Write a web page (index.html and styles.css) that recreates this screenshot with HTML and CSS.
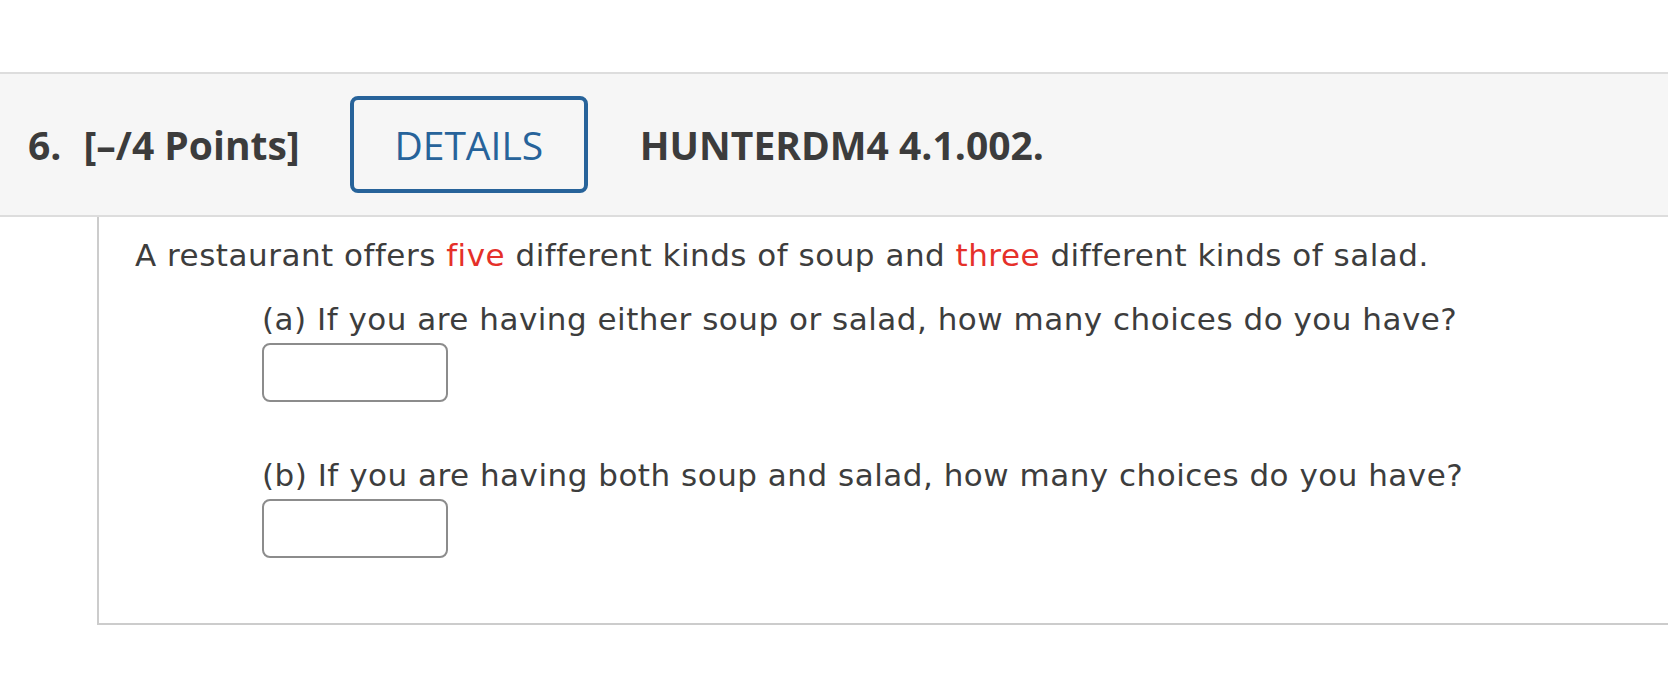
FILE: index.html
```html
<!DOCTYPE html>
<html lang="en">
<head>
<meta charset="utf-8">
<title>Question 6</title>
<link rel="stylesheet" href="styles.css">
</head>
<body>
<div class="page">
  <div class="qheader">
    <span class="qnum">6.</span>
    <span class="qpoints">[–/4 Points]</span>
    <button class="details" type="button">DETAILS</button>
    <span class="qref">HUNTERDM4 4.1.002.</span>
  </div>
  <div class="qbody">
    <p class="intro">A restaurant offers <span class="red">five</span> different kinds of soup and <span class="red">three</span> different kinds of salad.</p>
    <div class="part part-a">
      <p class="ptext">(a) If you are having either soup or salad, how many choices do you have?</p>
      <input class="answer" type="text" aria-label="answer a">
    </div>
    <div class="part part-b">
      <p class="ptext">(b) If you are having both soup and salad, how many choices do you have?</p>
      <input class="answer" type="text" aria-label="answer b">
    </div>
  </div>
</div>
</body>
</html>
```

FILE: styles.css
```css
html, body {
  margin: 0;
  padding: 0;
  background: #ffffff;
}

.page {
  padding-top: 72px;
}

.qheader {
  display: flex;
  align-items: center;
  height: 141px;
  background: #f6f6f6;
  border-top: 2px solid #dddddd;
  border-bottom: 2px solid #dddddd;
  padding-left: 28px;
  font-family: "Open Sans", sans-serif;
  font-size: 39px;
  font-weight: 700;
  color: #3c3c3c;
}

.qnum {
  margin-right: 22px;
}

.qpoints {
  margin-right: 50px;
}

.details {
  box-sizing: border-box;
  width: 238px;
  height: 97px;
  padding: 0;
  margin: 0 52px 0 0;
  background: #f6f6f6;
  border: 4px solid #27639a;
  border-radius: 8px;
  color: #27639a;
  font-family: "Open Sans", sans-serif;
  font-size: 39px;
  font-weight: 400;
  line-height: 1;
}

.qbody {
  margin-left: 97px;
  border-left: 2px solid #cccccc;
  border-bottom: 2px solid #cccccc;
  padding: 18px 0 65px 36px;
  font-family: "DejaVu Sans", Verdana, sans-serif;
  font-size: 31px;
  line-height: 40px;
  letter-spacing: 0.5px;
  color: #3d3d3d;
}

.intro {
  margin: 0;
}

.red {
  color: #e5302a;
}

.part {
  margin-left: 127px;
}

.part-a {
  margin-top: 24px;
}

.part-b {
  margin-top: 53px;
}

.ptext {
  margin: 0 0 4px 0;
}

.answer {
  display: block;
  box-sizing: border-box;
  width: 186px;
  height: 59px;
  margin: 0;
  border: 2px solid #8c8c8c;
  border-radius: 8px;
  background: #ffffff;
  font-size: 31px;
}
```
